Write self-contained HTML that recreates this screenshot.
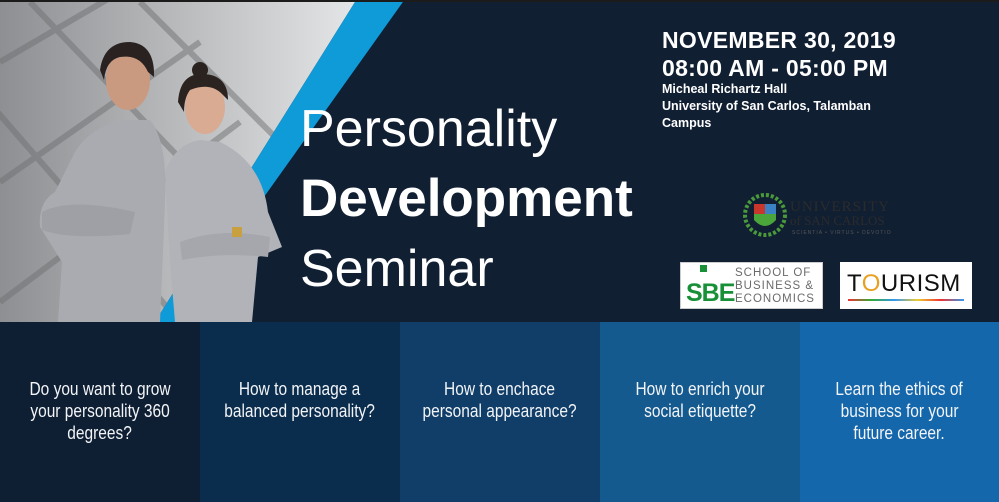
<!DOCTYPE html>
<html><head><meta charset="utf-8"><style>
*{margin:0;padding:0;box-sizing:border-box}
body{width:999px;height:502px;overflow:hidden;background:#111f33;font-family:"Liberation Sans",sans-serif;position:relative}
.abs{position:absolute}
.q{position:absolute;top:322px;height:180px;width:200px;color:#f2f4f7;font-size:18px;line-height:22px;text-align:center;padding-top:56px}
.q span{display:inline-block;transform:scaleX(0.86);white-space:nowrap}
</style></head><body>
<div class="abs" style="left:0;top:0;width:999px;height:2px;background:#1b1b1b"></div>
<svg class="abs" style="left:0;top:2px" width="420" height="320" viewBox="0 0 420 320">
<defs><linearGradient id="bg" x1="0" y1="0" x2="1" y2="0"><stop offset="0" stop-color="#8d8f92"/><stop offset="0.5" stop-color="#b8babc"/><stop offset="1" stop-color="#e4e5e6"/></linearGradient></defs>
<polygon points="0,0 355,0 155,320 0,320" fill="url(#bg)"/>
<g stroke="#6d6f72" stroke-width="6" opacity="0.5" fill="none">
<path d="M0,60 L120,-10 M0,180 L200,40 M0,300 L240,120 M30,0 L260,240 M-20,90 L180,320 M140,0 L300,160"/>
</g>
<polygon points="355,0 403,0 175,320 155,320" fill="#0f9ad8"/>
<polygon points="403,0 420,0 420,320 175,320" fill="#111f33"/>
<!-- man -->
<path d="M75,150 Q90,125 125,118 L150,118 Q168,140 165,200 L160,320 L58,320 L62,260 L40,225 Q38,200 55,190 Z" fill="#a9abb0"/>
<path d="M42,210 Q70,195 135,210 L130,232 Q70,238 42,228 Z" fill="#9ea0a5"/>
<ellipse cx="128" cy="78" rx="22" ry="30" fill="#c99a80"/>
<path d="M100,68 Q104,40 130,40 Q155,42 154,75 L148,70 Q140,52 120,55 Q106,58 104,78 Z" fill="#2a2220"/>
<!-- woman -->
<path d="M165,170 Q175,142 200,138 L220,140 Q262,160 268,210 L282,245 L258,255 L252,320 L175,320 L170,260 Z" fill="#b1b3b8"/>
<path d="M180,240 Q220,225 270,235 L268,255 Q220,250 182,258 Z" fill="#a5a7ac"/>
<ellipse cx="205" cy="105" rx="20" ry="27" fill="#d8ab92"/>
<path d="M178,100 Q180,70 205,72 Q228,74 228,98 L222,92 Q210,80 190,88 Q184,96 184,110 Z" fill="#2b2320"/>
<circle cx="200" cy="68" r="8" fill="#2b2320"/>
<rect x="232" y="225" width="10" height="10" fill="#c8a040"/>
</svg>
<div class="abs" style="left:300px;top:94px;color:#fff;font-size:52px;line-height:70px;">
<div>Personality</div><div style="font-weight:bold;font-size:53px">Development</div><div>Seminar</div></div>
<div class="abs" style="left:662px;top:26px;color:#fff;font-weight:bold;font-size:23px;line-height:28px;letter-spacing:0.3px">NOVEMBER 30, 2019<br>08:00 AM - 05:00 PM</div>
<div class="abs" style="left:662px;top:81px;color:#fff;font-weight:bold;font-size:12.5px;line-height:17px">Micheal Richartz Hall<br>University of San Carlos, Talamban<br>Campus</div>
<svg class="abs" style="left:742px;top:192px" width="170" height="46" viewBox="0 0 170 46">
<circle cx="23" cy="23" r="20" fill="none" stroke="#4a9a3a" stroke-width="4" stroke-dasharray="3 2"/>
<path d="M12,12 L34,12 L34,28 Q23,40 12,28 Z" fill="#4aa53a"/>
<rect x="12" y="12" width="11" height="10" fill="#c9372c"/><rect x="23" y="12" width="11" height="10" fill="#3b82c4"/>
<text x="48" y="19" font-family="Liberation Serif,serif" font-size="15" fill="#2b2b2b" letter-spacing="1">UNIVERSITY</text>
<text x="48" y="33" font-family="Liberation Serif,serif" font-size="13" fill="#2b2b2b">of SAN CARLOS</text>
<text x="50" y="42" font-size="5" fill="#555" letter-spacing="1">SCIENTIA • VIRTUS • DEVOTIO</text>
</svg>
<div class="abs" style="left:680px;top:262px;width:143px;height:47px;background:#fff;border:1px solid #ccc">
<span class="abs" style="left:5px;top:16px;font-weight:bold;font-size:25px;color:#179038;letter-spacing:-1px">SBE</span>
<span class="abs" style="left:19px;top:2px;width:7px;height:7px;background:#179038"></span>
<span class="abs" style="left:54px;top:4px;font-size:11.5px;line-height:13px;color:#6b6b6b;letter-spacing:1px">SCHOOL OF<br>BUSINESS &amp;<br>ECONOMICS</span></div>
<div class="abs" style="left:840px;top:262px;width:132px;height:47px;background:#fff;overflow:hidden">
<span class="abs" style="left:7px;top:8px;font-size:24px;color:#111;letter-spacing:0.5px">T<span style="color:#e8a020">O</span>URISM</span>
<span class="abs" style="left:8px;top:37px;width:116px;height:2px;background:linear-gradient(90deg,#e33,#3a3,#39e,#ec3,#e33,#39e)"></span></div>
<div class="q" style="left:0;background:#0f1f33"><span>Do you want to grow</span><br><span>your personality 360</span><br><span>degrees?</span></div>
<div class="q" style="left:200px;background:#0b2d4d"><span>How to manage a</span><br><span>balanced personality?</span></div>
<div class="q" style="left:400px;background:#113e69"><span>How to enchace</span><br><span>personal appearance?</span></div>
<div class="q" style="left:600px;background:#155a8f"><span>How to enrich your</span><br><span>social etiquette?</span></div>
<div class="q" style="left:800px;width:199px;background:#1567ab"><span>Learn the ethics of</span><br><span>business for your</span><br><span>future career.</span></div>
</body></html>
